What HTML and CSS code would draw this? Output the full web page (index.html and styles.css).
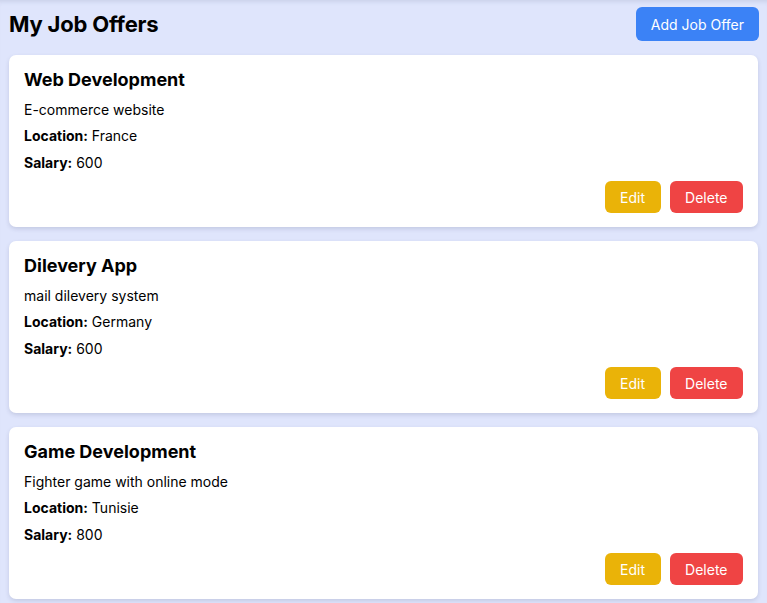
FILE: index.html
```html
<!DOCTYPE html>
<html lang="en">
<head>
<meta charset="utf-8">
<title>My Job Offers</title>
<link rel="stylesheet" href="styles.css">
</head>
<body>
<div class="page">
  <header class="header">
    <h1 class="page-title">My Job Offers</h1>
    <button class="btn btn-primary">Add Job Offer</button>
  </header>
  <main class="list">
    <article class="card">
      <h2 class="card-title">Web Development</h2>
      <p class="desc">E-commerce website</p>
      <p class="meta loc"><strong>Location:</strong> France</p>
      <p class="meta"><strong>Salary:</strong> 600</p>
      <div class="actions">
        <button class="btn btn-edit">Edit</button>
        <button class="btn btn-delete">Delete</button>
      </div>
    </article>
    <article class="card">
      <h2 class="card-title">Dilevery App</h2>
      <p class="desc">mail dilevery system</p>
      <p class="meta loc"><strong>Location:</strong> Germany</p>
      <p class="meta"><strong>Salary:</strong> 600</p>
      <div class="actions">
        <button class="btn btn-edit">Edit</button>
        <button class="btn btn-delete">Delete</button>
      </div>
    </article>
    <article class="card">
      <h2 class="card-title">Game Development</h2>
      <p class="desc">Fighter game with online mode</p>
      <p class="meta loc"><strong>Location:</strong> Tunisie</p>
      <p class="meta"><strong>Salary:</strong> 800</p>
      <div class="actions">
        <button class="btn btn-edit">Edit</button>
        <button class="btn btn-delete">Delete</button>
      </div>
    </article>
  </main>
</div>
</body>
</html>
```

FILE: styles.css
```css
* { box-sizing: border-box; }
html, body {
  margin: 0;
  padding: 0;
  background: #dfe5fc;
  font-family: Inter, "Noto Sans", "Liberation Sans", sans-serif;
  color: #000;
}
body {
  box-shadow: inset 0 5px 4px -3px rgba(60, 70, 110, 0.12);
  min-height: 603px;
}
.page {
  padding: 7px 9px 0 9px;
}
.header {
  display: flex;
  align-items: center;
  justify-content: space-between;
  margin: 0 -1px 14px 0;
}
.page-title {
  margin: 0;
  font-size: 22px;
  font-weight: 700;
  line-height: 34px;
  letter-spacing: -0.2px;
}
.btn {
  font-family: inherit;
  font-size: 14px;
  border: none;
  color: #fff;
  border-radius: 6px;
  cursor: pointer;
  padding: 0 15.5px;
  font-weight: 400;
}
.btn-primary {
  background: #3b82f6;
  height: 34px;
  padding: 0 15px;
}
.list {
  display: flex;
  flex-direction: column;
  gap: 14px;
}
.card {
  background: #fff;
  border-radius: 7px;
  padding: 12px 15px 14px 15px;
  box-shadow: 0 2px 4px rgba(40, 50, 90, 0.15);
}
.card-title {
  margin: 0 0 7px 0;
  font-size: 18px;
  font-weight: 700;
  line-height: 26px;
}
.desc, .meta {
  margin: 0;
  font-size: 14px;
  line-height: 20px;
}
.desc { margin-bottom: 6px; }
.meta.loc { margin-bottom: 7px; }
.meta strong { font-weight: 700; }
.actions {
  display: flex;
  justify-content: flex-end;
  gap: 9px;
  margin-top: 8px;
}
.btn-edit, .btn-delete { height: 32px; }
.btn-edit { background: #eab308; }
.btn-delete { background: #ef4444; }
```
